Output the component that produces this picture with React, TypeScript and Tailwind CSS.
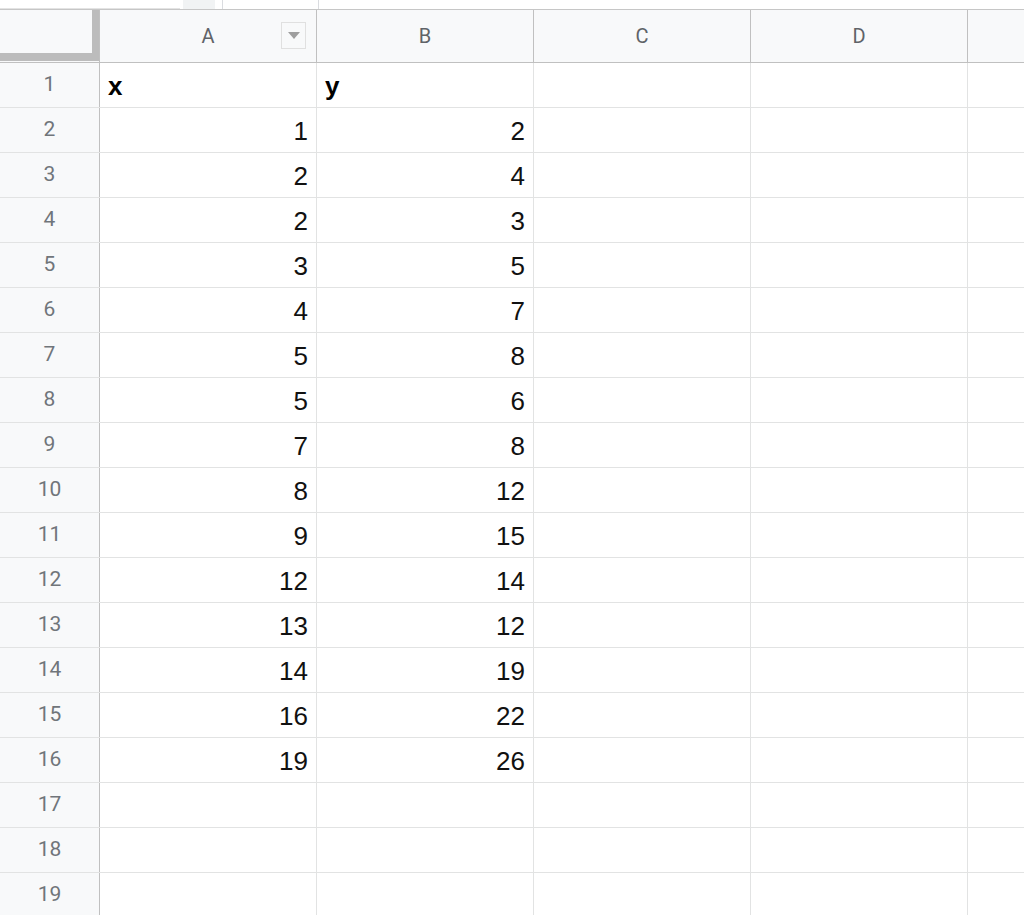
import React from "react";

const data: [string, string][] = [
  ["x", "y"],
  ["1", "2"],
  ["2", "4"],
  ["2", "3"],
  ["3", "5"],
  ["4", "7"],
  ["5", "8"],
  ["5", "6"],
  ["7", "8"],
  ["8", "12"],
  ["9", "15"],
  ["12", "14"],
  ["13", "12"],
  ["14", "19"],
  ["16", "22"],
  ["19", "26"],
  ["", ""],
  ["", ""],
  ["", ""],
];

const cols = ["A", "B", "C", "D"];

export default function App() {
  return (
    <div className="w-[1024px] h-[915px] overflow-hidden bg-white font-['Liberation_Sans',Arial,sans-serif]">
      {/* toolbar remnant */}
      <div className="flex h-[10px] border-b border-[#c6c6c6] bg-white">
        <div className="w-[180px] border-b border-[#e3e3e3]" />
        <div className="ml-[3px] w-[32px] bg-[#f1f3f4]" />
        <div className="ml-[7px] w-px bg-[#dadce0]" />
        <div className="w-[95px]" />
        <div className="w-px bg-[#dadce0]" />
      </div>

      {/* column headers */}
      <div className="flex h-[53px] border-b border-[#c0c0c0] bg-[#f8f9fa] font-['Roboto',sans-serif] text-[20px] text-[#5f6368]">
        <div className="flex w-[99px] shrink-0 flex-col">
          <div className="flex flex-1">
            <div className="flex-1 bg-[#f8f9fa]" />
            <div className="w-[7px] bg-[#bcbcbc]" />
          </div>
          <div className="h-[8px] bg-[#bcbcbc]" />
          <div className="h-px bg-[#f8f9fa]" />
        </div>
        {cols.map((c) => (
          <div
            key={c}
            className="relative flex w-[217px] shrink-0 items-center justify-center border-l border-[#c0c0c0]"
          >
            {c}
            {c === "A" && (
              <div className="absolute right-[10px] top-[12px] flex h-[27px] w-[25px] items-center justify-center border border-[#e0e0e0] bg-[#f8f9fa]">
                <svg width="12" height="7" viewBox="0 0 12 7">
                  <path d="M0 0 L12 0 L6 7 Z" fill="#9e9e9e" />
                </svg>
              </div>
            )}
          </div>
        ))}
        <div className="flex-1 border-l border-[#c0c0c0]" />
      </div>

      {/* rows */}
      {data.map(([a, b], i) => {
        const bold = i === 0;
        return (
          <div key={i} className="flex h-[45px] border-b border-[#e2e3e3]">
            <div className="flex w-[100px] shrink-0 items-center justify-center border-r border-[#c0c0c0] bg-[#f8f9fa] font-['Roboto',sans-serif] text-[21px] text-[#70757a]">
              {i + 1}
            </div>
            {[a, b].map((v, j) => (
              <div
                key={j}
                className={
                  bold
                    ? "flex w-[217px] shrink-0 items-end border-r border-[#e2e3e3] px-[8px] pb-px text-[26px] font-bold text-black"
                    : "flex w-[217px] shrink-0 items-end justify-end border-r border-[#e2e3e3] px-[8px] pb-px text-[26px] text-[#111]"
                }
              >
                {v}
              </div>
            ))}
            <div className="w-[217px] shrink-0 border-r border-[#e2e3e3]" />
            <div className="w-[217px] shrink-0 border-r border-[#e2e3e3]" />
            <div className="flex-1" />
          </div>
        );
      })}
    </div>
  );
}
